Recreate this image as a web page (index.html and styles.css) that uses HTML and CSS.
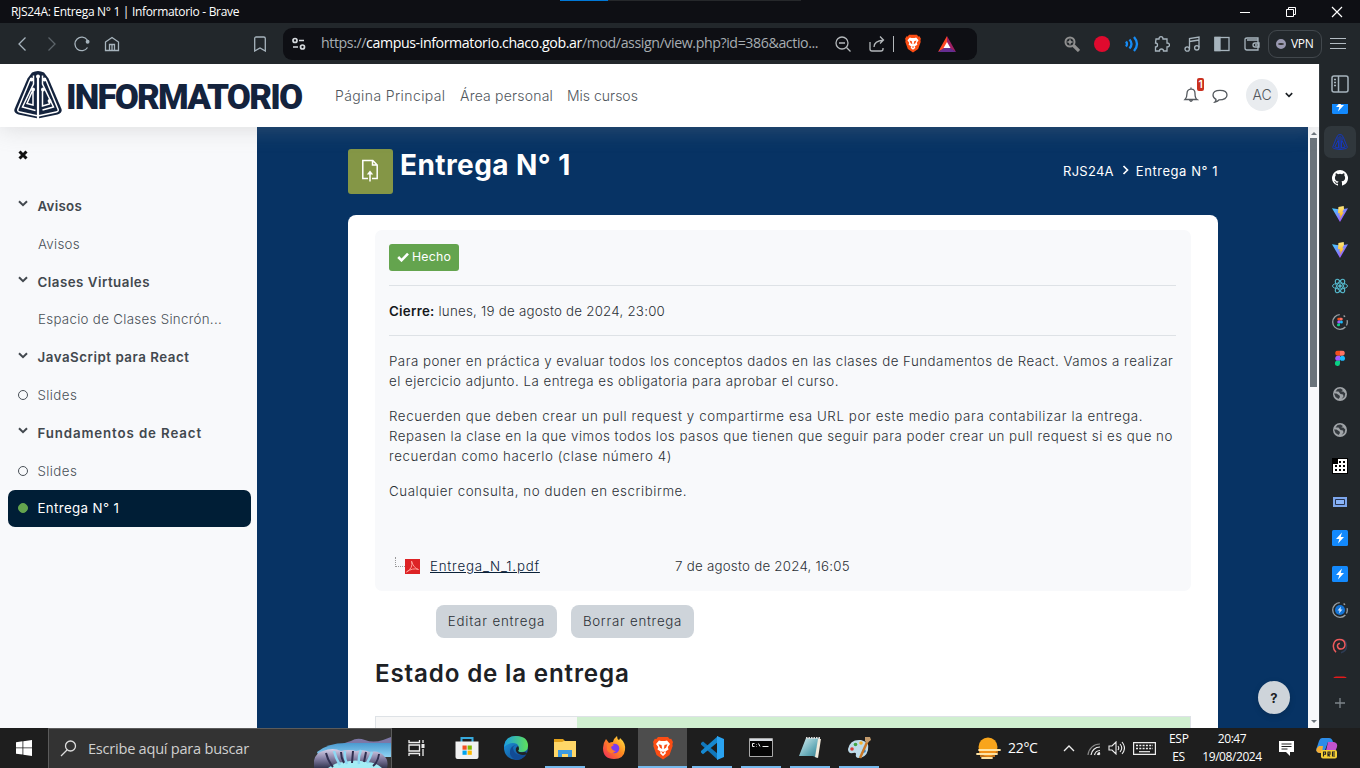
FILE: index.html
```html
<!DOCTYPE html>
<html lang="es">
<head>
<meta charset="utf-8">
<title>RJS24A: Entrega N° 1 | Informatorio</title>
<link rel="stylesheet" href="styles.css">
</head>
<body>
<svg class="defs" width="0" height="0" aria-hidden="true">
  <defs>
    <linearGradient id="vite" x1="0" y1="0" x2="1" y2="1"><stop offset="0" stop-color="#41d1ff"/><stop offset="1" stop-color="#bd34fe"/></linearGradient>
    <linearGradient id="spark" x1="0" y1="0" x2="0" y2="1"><stop offset="0" stop-color="#ffea83"/><stop offset="1" stop-color="#ffa800"/></linearGradient>
    <linearGradient id="edgeA" x1="0" y1="0" x2="1" y2="0"><stop offset="0" stop-color="#1b9de2"/><stop offset="1" stop-color="#5fe05a"/></linearGradient>
    <linearGradient id="edgeB" x1="0" y1="0" x2="1" y2="1"><stop offset="0" stop-color="#1b9de2"/><stop offset="1" stop-color="#123c84"/></linearGradient>
    <linearGradient id="fox" x1="1" y1="0" x2="0" y2="1"><stop offset="0" stop-color="#fff04a"/><stop offset=".45" stop-color="#ff8a1f"/><stop offset="1" stop-color="#f0245e"/></linearGradient>
    <linearGradient id="ice" x1="0" y1="0" x2="0" y2="1"><stop offset="0" stop-color="#d9d2ea"/><stop offset=".5" stop-color="#8580a5"/><stop offset="1" stop-color="#343650"/></linearGradient>
    <linearGradient id="sky" x1="0" y1="0" x2="0" y2="1"><stop offset="0" stop-color="#4a99cf"/><stop offset="1" stop-color="#8fd4f4"/></linearGradient>
    <linearGradient id="pad" x1="0" y1="0" x2="1" y2="1"><stop offset="0" stop-color="#d8f0f3"/><stop offset=".6" stop-color="#65aab7"/><stop offset="1" stop-color="#2f7686"/></linearGradient>
    <symbol id="bolt" viewBox="0 0 16 16"><rect width="16" height="16" rx="1.5" fill="#1389fd"/><path d="M10 2.500 4 9h3.300L6 13.500 12 7H8.700z" fill="#fff"/></symbol>
    <symbol id="viteicon" viewBox="0 0 16 16"><path d="M0 2.200 8 16 16 2.200 8.300 3.500z" fill="url(#vite)"/><path d="M11.700 0 6.400 1 6 7.300l1.800-.4-.6 2.500 1.400-.5-.8 4.200 4.100-7-1.800.3L12 3z" fill="url(#spark)"/></symbol>
    <symbol id="globe" viewBox="0 0 16 16"><circle cx="8" cy="8" r="7" fill="#a0a4a8"/><path d="M8.500 2.500 5.500 3 3.500 5.500h3L8.500 8l2.500.500.500 2-2 2.500 3-2 .800-3.500-2-2h-2L11 4zM2 7.500h2.500L7.500 9.500 8 11l-1.500 2-3-2z" fill="#353a3f"/></symbol>
    <symbol id="figma" viewBox="0 0 12 18"><path d="M3.500 0H6v6H3.500a3 3 0 0 1 0-6z" fill="#f24e1e"/><path d="M6 0h2.500a3 3 0 0 1 0 6H6z" fill="#ff7262"/><path d="M3.500 6H6v6H3.500a3 3 0 0 1 0-6z" fill="#a259ff"/><circle cx="8.800" cy="9" r="3" fill="#1abcfe"/><path d="M3.500 12H6v3a3 3 0 1 1-2.500-3z" fill="#0acf83"/></symbol>
    <symbol id="lion" viewBox="0 0 20 24"><path d="M5 1h10l1.700 2 1.500-.2L20 6l-.6 2 .3 2-3.200 9L10 23.500 3.500 19 .3 10l.3-2L0 6l1.800-3.200 1.500.2z" fill="#fb4d14"/><path d="M6 4.500l2 .6h4l2-.6 3 3.500-2.200 3 .7 2.600-3 2 .3 2L10 20l-2.800-2.400.3-2-3-2 .7-2.600L3 8z" fill="#fff"/><path d="M5.500 8.200l3 .8.700 4-2.200-1.200zm9 0-3 .8-.7 4 2.200-1.200zM8 15l2 1 2-1-2 3z" fill="#fb4d14"/></symbol>
    <symbol id="down" viewBox="0 0 10 7"><path d="m1 1.200 4 4 4-4" fill="none" stroke="currentColor" stroke-width="2"/></symbol>
  </defs>
</svg>

<div class="screen">
  <header class="titlebar">
    <span class="wintitle">RJS24A: Entrega N° 1 | Informatorio - Brave</span>
    <span class="loading"><i></i></span>
    <div class="winbtns">
      <svg width="12" height="12"><path d="M1 6.500h10" stroke="#fff"/></svg>
      <svg width="12" height="12" fill="none" stroke="#fff"><path d="M1.500 3.500h7v7h-7zM3.500 3.500v-2h7v7h-2"/></svg>
      <svg width="12" height="12"><path d="m1 1 10 10M11 1 1 11" stroke="#fff" stroke-width="1.200"/></svg>
    </div>
  </header>

  <nav class="toolbar">
    <div class="cells">
      <svg viewBox="0 0 16 16"><path d="M11.500 1.500 5 8l6.500 6.500"/></svg>
      <svg viewBox="0 0 16 16" class="dim"><path d="M4.500 1.500 11 8l-6.500 6.500"/></svg>
      <svg viewBox="0 0 16 16"><path d="M13.500 11.500A6.800 6.800 0 1 1 13.300 4"/><circle cx="13.600" cy="5.800" r="1.300" fill="#a7b4bd"/></svg>
      <svg viewBox="0 0 16 16"><path d="M1.500 6 8 1.500 14.500 6v8.500h-13zM5.500 14V8.500h5V14M8 9v5"/></svg>
    </div>
    <div class="cells mark"><svg viewBox="0 0 16 16"><path d="M2.700 2.500q0-1.500 1.500-1.500h7.600q1.500 0 1.500 1.500V15L8 12l-5.300 3z"/></svg></div>
    <div class="url">
      <svg class="site" width="16" height="16" viewBox="0 0 16 16" fill="none" stroke="#d6dade" stroke-width="1.700"><circle cx="4" cy="4.500" r="2"/><path d="M8 4.500h5M2 11h5" /><circle cx="11.500" cy="11" r="2"/></svg>
      <span class="address">https://<b>campus-informatorio.chaco.gob.ar</b>/mod/assign/view.php?id=386&amp;actio...</span>
      <svg class="zoomout" width="18" height="18" viewBox="0 0 18 18"><circle cx="8" cy="8" r="6"/><path d="m12.500 12.500 4 4M5 8h6"/></svg>
      <svg class="share" width="18" height="18" viewBox="0 0 18 18"><path d="M2 7v7q0 2 2 2h9q2 0 2-2v-1M6 12q0-6 9.500-7M12 1.500 15.500 5 12 8.500"/></svg>
      <i class="bar"></i>
      <svg class="lion" width="16" height="19"><use href="#lion"/></svg>
      <svg class="bat" width="18" height="16" viewBox="0 0 18 16"><path d="M9 0 0 16l9-5z" fill="#ff4724"/><path d="m9 0 9 16-9-5z" fill="#9e1f63"/><path d="M0 16 9 10l9 6z" fill="#662d91"/><path d="m9 6 3.500 6h-7z" fill="#fff"/></svg>
    </div>
    <div class="cells ext">
      <svg viewBox="0 0 16 16"><circle cx="6" cy="6" r="4.500" stroke="#8f8f8f" stroke-width="2"/><path d="m9.500 9.500 5.500 5.500" stroke="#8f8f8f" stroke-width="3.200"/><path d="M3.500 6h5M6 3.500v5" stroke="#999" stroke-width="1.500"/></svg>
      <svg viewBox="0 0 16 16"><circle cx="8" cy="8" r="8" fill="#df0a2e" stroke="none"/></svg>
      <svg viewBox="0 0 16 16"><g stroke="#178cf5" stroke-width="2.300"><path d="M2 5.500q2 2.500 0 5M5.500 3.500q4 4.500 0 9M10 1q6 7 0 14"/></g></svg>
      <svg viewBox="0 0 16 16"><path d="M2 3h3q0-2.300 2-2.300T9 3h4v4q2.500 0 2.500 2T13 11v4H9.500q0-2-2-2t-2 2H1.500v-4q2 0 2-2t-2-2z"/></svg>
      <svg viewBox="0 0 16 16"><path d="M5.500 13V2.500L15 1v10.500M5.500 5.500 15 4"/><circle cx="3.200" cy="13" r="2.200"/><circle cx="12.800" cy="11.800" r="2.200"/></svg>
      <svg viewBox="0 0 16 16"><rect x="1" y="1.500" width="14" height="13"/><path d="M1 1.500h5v13H1z" fill="#a7b4bd"/></svg>
      <svg viewBox="0 0 16 16"><path d="M14 4V2H3Q1 2 1 3.500V12q0 2 2 2h11V4H3M15 7h-4q-2 0-2 2t2 2h4zM11 9h2"/></svg>
    </div>
    <div class="vpn"><i></i>VPN</div>
    <svg class="burger" width="16" height="13"><path d="M0 1.500h16M0 6.500h16M0 11.500h16" stroke="#b3bcc3"/></svg>
  </nav>

  <div class="window">
    <div class="site-page">
      <header class="siteheader">
        <svg class="crest" width="48" height="48" viewBox="0 0 48 48">
          <path d="M18 1.500q6-3 12 0l4.500 6L47.500 38q1 4-4 5.500L24 47.500 4.500 43.500Q-.5 42 .5 38L13.500 7.500z" fill="#14233d"/>
          <g fill="none" stroke="#fff" stroke-width="1.500">
            <path d="M16 9 3.800 38.500q-.5 2 2 2.500L23 44.700M32 9l12.200 29.500q.5 2-2 2.500L25 44.700"/>
            <path d="M19.500 4.500V13L8.500 36l13 3.500M28.500 4.500V13L39.500 36l-11 3M19.500 18.500 17.500 22 13 32.500l6 1.500V18M28.500 18v17l7-2v-4"/>
          </g>
          <path d="M24 5v43" stroke="#fff" stroke-width="2.200"/>
          <g fill="#fff"><circle cx="24" cy="5.500" r="2"/><circle cx="17.500" cy="8.500" r="1.900"/><circle cx="30.500" cy="8.500" r="1.900"/><circle cx="19" cy="18.500" r="2"/><circle cx="29" cy="18.500" r="2"/><circle cx="35.500" cy="30" r="1.900"/></g>
        </svg>
        <span class="brand">INFORMATORIO</span>
        <a class="n1">Página Principal</a><a class="n2">Área personal</a><a class="n3">Mis cursos</a>
        <div class="user">
          <div class="bell"><svg width="16" height="16" viewBox="0 0 16 16" fill="none" stroke="#555a5f" stroke-width="1.300"><path d="M2 12.500q2-2 2-6T8 2.200t4 4.300 2 6zM6.500 13q1.500 2.500 3 0M8 .5v2"/></svg><b>1</b></div>
          <svg class="chat" width="16" height="14" viewBox="0 0 16 14" fill="none" stroke="#555a5f" stroke-width="1.300"><path d="M4 10.300Q1 8.800 1 6q0-4.700 7-4.700T15 6q0 4.800-8 4.800-1 1.500-4 2.200 1-1 1-2.700z"/></svg>
          <span class="avatar">AC</span>
          <svg class="caret" width="8" height="6"><use href="#down"/></svg>
        </div>
      </header>

      <div class="body">
        <aside class="drawer">
          <svg class="close" width="10" height="10"><path d="m1.500 1.500 7 7M8.500 1.500l-7 7" stroke="#111" stroke-width="3"/></svg>
          <ul>
            <li class="sec"><svg width="10" height="7"><use href="#down"/></svg><span class="s1">Avisos</span></li>
            <li><span class="s2">Avisos</span></li>
            <li class="sec"><svg width="10" height="7"><use href="#down"/></svg><span class="s3">Clases Virtuales</span></li>
            <li><span class="s4">Espacio de Clases Sincrón...</span></li>
            <li class="sec"><svg width="10" height="7"><use href="#down"/></svg><span class="s5">JavaScript para React</span></li>
            <li><i class="ring"></i><span class="s6">Slides</span></li>
            <li class="sec"><svg width="10" height="7"><use href="#down"/></svg><span class="s7">Fundamentos de React</span></li>
            <li><i class="ring"></i><span class="s6">Slides</span></li>
            <li class="active"><i class="ring"></i><span class="s8">Entrega N° 1</span></li>
          </ul>
        </aside>

        <main>
          <div class="heading">
            <div class="acticon"><svg width="18" height="24" viewBox="0 0 18 24" fill="none" stroke="#fff" stroke-width="1.500"><path d="M7 19.500H1.800v-18h10l4.400 4.500v13.500H11M11.500 1.500V6H16M9 22.500V14"/><path d="M9 11.500 5.800 15.500h6.400z" fill="#fff" stroke="none"/></svg></div>
            <h1>Entrega N° 1</h1>
            <div class="crumbs"><span class="c1">RJS24A</span><svg width="7" height="10"><path d="m1.500 1 4 4-4 4" fill="none" stroke="#fff" stroke-width="1.700"/></svg><span class="c2">Entrega N° 1</span></div>
          </div>
          <section class="card">
            <div class="panel">
              <div class="done"><svg width="12" height="10"><path d="m1.200 5 3.300 3.300L11 1.700" fill="none" stroke="#fff" stroke-width="2.600"/></svg>Hecho</div>
              <div class="due"><b>Cierre:</b> <span>lunes, 19 de agosto de 2024, 23:00</span></div>
              <p><span class="l1">Para poner en práctica y evaluar todos los conceptos dados en las clases de Fundamentos de React. Vamos a realizar</span><br><span class="l2">el ejercicio adjunto. La entrega es obligatoria para aprobar el curso.</span></p>
              <p><span class="l3">Recuerden que deben crear un pull request y compartirme esa URL por este medio para contabilizar la entrega.</span><br><span class="l4">Repasen la clase en la que vimos todos los pasos que tienen que seguir para poder crear un pull request si es que no</span><br><span class="l5">recuerdan como hacerlo (clase número 4)</span></p>
              <p><span class="l6">Cualquier consulta, no duden en escribirme.</span></p>
              <div class="file">
                <i class="branch"></i>
                <svg width="15" height="15" viewBox="0 0 15 15"><rect width="15" height="15" fill="#dd2325"/><path d="M6.500 2q2 7-5 11 6-4.500 12-2.500Q8.500 9 6.500 2z" fill="none" stroke="#ff9e96"/></svg>
                <span class="name"><a>Entrega_N_1.pdf</a></span><span class="date">7 de agosto de 2024, 16:05</span>
              </div>
            </div>
            <div class="actions"><button class="edit">Editar entrega</button><button class="del">Borrar entrega</button></div>
            <h2>Estado de la entrega</h2>
            <div class="table"><div></div><div class="ok"></div></div>
          </section>
          <button class="help">?</button>
        </main>
        <div class="scroll"><i class="up"></i><i class="thumb"></i><i class="dn"></i></div>
      </div>
    </div>

    <aside class="strip">
      <svg class="panelicon" width="18" height="18" fill="none" stroke="#a7b4bd" stroke-width="1.500"><rect x="1" y="1" width="16" height="16" rx="2"/><path d="M7.500 1v16"/><path d="M3 4.500h2M3 7.500h2M3 10.500h2"/></svg>
      <div class="tabs">
        <div><svg><use href="#bolt"/></svg></div>
        <div class="on"><span><svg viewBox="0 0 16 16" fill="none" stroke="#1238c9" stroke-width=".9"><path d="M6.500.7h3l1.800 2.500 4 10-1 1.300-6.300 1-6.300-1-1-1.300 4-10zM8 2v13M6 3v3.500L2.800 13l3.700 1V6.500M10 3v3.500l3.200 6.500-3.700 1V6.500"/></svg></span></div>
        <div><svg viewBox="0 0 16 16"><path fill="#fff" d="M8 0a8 8 0 0 0-2.530 15.590c.4.070.550-.170.550-.380v-1.490c-2.230.480-2.690-.940-2.690-.940-.360-.930-.890-1.170-.890-1.170-.730-.500.050-.490.050-.490.800.060 1.230.830 1.230.830.720 1.220 1.870.870 2.330.660.070-.520.280-.870.510-1.070-1.780-.200-3.640-.890-3.640-3.950 0-.870.310-1.590.820-2.150-.080-.200-.360-1.020.080-2.120 0 0 .670-.210 2.200.820a7.600 7.600 0 0 1 4 0c1.530-1.040 2.200-.820 2.200-.820.440 1.100.160 1.920.080 2.120.510.560.820 1.270.820 2.150 0 3.070-1.870 3.750-3.650 3.950.290.250.540.730.540 1.480v2.190c0 .210.150.460.550.380A8 8 0 0 0 8 0z"/></svg></div>
        <div><svg><use href="#viteicon"/></svg></div>
        <div><svg><use href="#viteicon"/></svg></div>
        <div><svg viewBox="0 0 16 16" fill="none" stroke="#55b8cc"><ellipse cx="8" cy="8" rx="7.500" ry="3"/><ellipse cx="8" cy="8" rx="7.500" ry="3" transform="rotate(60 8 8)"/><ellipse cx="8" cy="8" rx="7.500" ry="3" transform="rotate(120 8 8)"/><circle cx="8" cy="8" r="1.300" fill="#55b8cc"/></svg></div>
        <div><svg viewBox="0 0 16 16"><circle class="orbit" cx="8" cy="8" r="7.300"/><use href="#figma" x="5" y="3.500" width="6" height="9"/></svg></div>
        <div><svg viewBox="0 0 16 16"><use href="#figma" x="2.500" y="0.500" width="11" height="15.500"/></svg></div>
        <div><svg><use href="#globe"/></svg></div>
        <div><svg><use href="#globe"/></svg></div>
        <div><svg viewBox="0 0 16 16"><path d="M0 0h16v16H0z"/><path d="M6 1h9v14H1V6h5z" fill="#fff"/><path d="M7 3h2v2H7zm4 0h2v2h-2zM3 7h2v2H3zm4 0h2v2H7zm4 0h2v2h-2zM3 11h2v2H3zm4 0h2v2H7zm4 0h2v2h-2z"/></svg></div>
        <div><svg viewBox="0 0 16 16"><path d="M1 3h14v10H1z" fill="#7da6ec"/><path d="M3.500 5.500h9v5h-9z" fill="#8ab4f8" stroke="#26334f"/></svg></div>
        <div><svg><use href="#bolt"/></svg></div>
        <div><svg><use href="#bolt"/></svg></div>
        <div><svg viewBox="0 0 16 16"><circle class="orbit" cx="8" cy="8" r="7.300"/><circle cx="8" cy="8" r="5" fill="#1373d6"/><path d="M9 4.500 5.500 8.500h2L7 11.500l3.500-4h-2z" fill="#cfe4fb"/></svg></div>
        <div><svg viewBox="0 0 16 16" fill="none" stroke-width="1.500"><path d="M9 14.800Q14.500 13 14.500 8T11 2" stroke="#2d3c55"/><path d="M4 14.200C-.5 10 1 1.500 7.500 1.500c7 0 7 9.500 1.500 9.500-4.500 0-4.500-6-1-5.500" stroke="#ef5a5c"/></svg></div>
        <div><svg viewBox="0 0 16 16"><rect x="1" y="2.500" width="14" height="11" rx="3" fill="#e31b1b"/></svg></div>
      </div>
      <svg class="plus" width="12" height="12"><path d="M6 1v10M1 6h10" stroke="#7d858b" stroke-width="1.300"/></svg>
    </aside>
  </div>

  <footer class="taskbar">
    <div class="start"><svg width="16" height="16" viewBox="0 0 16 16" fill="#fff"><path d="M0 2.200 6.500 1.300v6.200H0zM7.300 1.200 16 0v7.500H7.300zM0 8.300h6.500v6.300L0 13.700zM7.300 8.300H16V16l-8.700-1.300z"/></svg></div>
    <div class="search">
      <svg width="17" height="17" fill="none" stroke="#ddd" stroke-width="1.300"><circle cx="10.500" cy="6" r="5"/><path d="M7 10 1 16"/></svg>
      <span>Escribe aquí para buscar</span>
      <svg class="art" width="77" height="31" viewBox="0 0 77 31"><path d="M25 9q7-4 12-5 6-4 14-1 8 3 18 0l8-3v11z" fill="#7d77a6"/><path d="M3 15Q14 6 32 6l45 0v14H5z" fill="url(#sky)"/><path d="M0 31q-2-14 9-17 10-4 18 0 8-2 15 0 8-2 14 1 9-2 14 4 5 4 3 12z" fill="url(#ice)"/><path d="M14 31q8-6 16-6 12-3 22 0 10 0 16 6z" fill="#a5edf5"/><path d="M20 14q2 8 6 14M31 14q-1 7 2 13M47 13q-3 7-2 14M58 15q-2 6-5 11" fill="none" stroke="#8ed8f3" stroke-width="2.500"/><path d="M12 16q2 8 7 14M27 15q0 6 3 11M39 14l-1 12M52 15l-2 10M65 17q-1 8-6 12" fill="none" stroke="#302f50" stroke-width="2"/></svg>
    </div>
    <div class="tview"><svg width="17" height="16" fill="none" stroke="#eee" stroke-width="1.300"><path d="M1 0v2.500h10.500V0M1 5h10.500v6H1zM1 16v-2.500h10.500V16M15 0v3M15 9v7"/><path d="M15 4v4" stroke-width="3"/></svg></div>
    <div class="apps">
      <div><svg viewBox="0 0 24 24"><path d="M6.500 8V2h11v6" fill="none" stroke="#37a9dc" stroke-width="2"/><path d="M.5 5.500h23V21q0 2-2 2h-19q-2 0-2-2z" fill="#f1f1f1"/><path d="M7.500 9.500h4.200v4.200H7.500z" fill="#f25022"/><path d="M12.600 9.500h4.200v4.200h-4.200z" fill="#7fba00"/><path d="M7.500 14.600h4.200v4.200H7.500z" fill="#00a4ef"/><path d="M12.600 14.600h4.200v4.200h-4.200z" fill="#ffb900"/></svg></div>
      <div><svg viewBox="0 0 24 24"><circle cx="12" cy="12" r="12" fill="url(#edgeB)"/><path d="M0 11Q1 0 12 0q12 0 12 10 0 6-7 6-4 0-3-2 2-3-1-6Q7 5 0 11z" fill="url(#edgeA)"/><path d="M9 12q1 6 6 7 4 1 7-1l-1 2q-4 4-9 4-7-3-6-9 .5-5 6-6-3 1-3 3z" fill="#124b95"/><path d="M14 10q2 3 0 5 2 2 6 1 3 0 3 2-4 2-8 0-4-2-3-6z" fill="#202326"/></svg></div>
      <div class="run"><svg viewBox="0 0 24 24"><path d="M1 3h9l2 2h11v4H1z" fill="#e3a21a"/><path d="M1 6h8l2-1h12v16H1z" fill="#ffd768"/><path d="M5 21v-7h14v7h-4v-3H9v3z" fill="#3d9ae0"/></svg></div>
      <div><svg viewBox="0 0 24 24"><path d="M4 3l3 4q2-1 4-1 1-4 4-6 0 3 2 4 1-1 1-2 6 5 5 12-1 9-11 9Q1 23 1 12q0-5 3-9z" fill="url(#fox)"/><circle cx="12.500" cy="12.500" r="4.800" fill="#7a3cf0"/><path d="M5 8q4-2 7 1l-3 2q1 4 5 4-6 5-9-1z" fill="#ff7a2b"/></svg></div>
      <div class="run cur"><svg viewBox="0 0 24 24"><use href="#lion" x="2" width="20" height="24"/></svg></div>
      <div class="run"><svg viewBox="0 0 24 24"><path d="m1 7 2-1.500L18 18v6L1 8.500z" fill="#1177bb"/><path d="m1 16.500 2 1.800L18 6V0L1 15z" fill="#1688d0"/><path d="m17 0 7 3v18l-7 3z" fill="#2aa3f1"/></svg></div>
      <div class="run"><svg viewBox="0 0 24 24"><path d="M.5 2.500h23v18H.5z" fill="#050505" stroke="#a9a9a9"/><path d="M1 3h22v2H1z" fill="#d8dce2"/><path d="M5.500 7.500H3.500v3h2M7.500 8v.5M7.500 10v.5M9.500 7.500l1.500 3M13.500 10.500h6" fill="none" stroke="#eee"/></svg></div>
      <div class="run"><svg viewBox="0 0 24 24"><path d="M8 2h14l-3 20-4-2L1 20z" fill="url(#pad)"/><path d="M20 3l3 0-3 19-3-1z" fill="#f1eadb"/><path d="M8 2h14" stroke="#d8d8d8" stroke-width="2" stroke-dasharray="1.500 1"/></svg></div>
      <div class="run"><svg viewBox="0 0 24 24"><path d="M1 13Q3 3 14 4q9 2 7 10-2 8-10 8-3-1-2-4 0-2-3-1-5 1-5-4z" fill="#bedbe9"/><circle cx="5" cy="13" r="1.800" fill="#da3b38"/><circle cx="8.500" cy="8.500" r="1.800" fill="#42a544"/><circle cx="14" cy="7" r="1.800" fill="#f5b02d"/><circle cx="17" cy="15" r="1.800" fill="#287fd1"/><path d="m22 2-9 20" stroke="#c87726" stroke-width="2.500"/><path d="M18 1l5 0 1 3-4 3-2-2z" fill="#c49b6c"/></svg></div>
    </div>
    <div class="tray">
      <svg class="sun" width="25" height="22" viewBox="0 0 25 22"><circle cx="12" cy="10" r="9.500" fill="#f9a51b"/><path d="M3 13h21M1 17h20M6 21h10" stroke="#ffe3a3" stroke-width="1.800" stroke-linecap="round"/><path d="M3 15h19M4 19h15" stroke="#f08b18" stroke-width="1.600"/></svg>
      <span class="temp">22°C</span>
      <svg class="t1" width="12" height="8" fill="none" stroke="#eee" stroke-width="1.300"><path d="m1 7 5-5 5 5"/></svg>
      <svg class="t2" width="15" height="15" fill="none" stroke="#eee" stroke-width="1.200"><path d="M2 14A12 12 0 0 1 14 3" stroke="#888"/><path d="M5 14a9 9 0 0 1 9-8M8.500 14A6 6 0 0 1 14 9.500" /><path d="M12 14a3 3 0 0 1 2-2" stroke-width="2.500"/></svg>
      <svg class="t3" width="17" height="14" fill="none" stroke="#eee" stroke-width="1.100"><path d="M1 5h3l4-4v12L4 9H1zM10 5q1.500 2 0 4M12 3q3.500 4 0 8M14 1q5 6 0 12"/></svg>
      <svg class="t4" width="23" height="13" fill="none" stroke="#eee" stroke-width="1.200"><path d="M.6.600h21.800v11.800H.6z"/><path d="M3 3.500h17M3 6.500h17" stroke-dasharray="2 1.300" stroke-width="1.500"/><path d="M6 9.700h11"/></svg>
      <span class="lang">ESP<br>ES</span>
      <span class="clock">20:47<br>19/08/2024</span>
      <svg class="t5" width="17" height="17"><path d="M1 1h15v11h-4v4l-4-4H1z" fill="#fff"/><path d="M3.500 4h10M3.500 6.500h10M3.500 9h6" stroke="#222"/></svg>
      <svg class="t6" width="22" height="21" viewBox="0 0 22 21"><path d="M6 0h7q3 0 4 4l-5 0-4 11H3q-4-1-2-6l2-6q1-3 3-3z" fill="#2d8ce8"/><path d="M12 4h6q4 1 3 5l-2 5q-1 3-5 3H9z" fill="#c254cf"/><path d="M3 8h4l-1 7H3q-4-1-2-5z" fill="#f3ad35"/><rect x="5" y="12" width="16" height="8.500" rx="2" fill="#f5cf35"/><path d="M7.500 18.500v-4.500h2v2.300h-2M12 18.500v-4.500h2v2.300h-2l2 2.200M19 14h-2.500v4H19M16.500 16H19" fill="none" stroke="#222" stroke-width="1.100"/></svg>
    </div>
  </footer>
</div>
</body>
</html>
```
FILE: styles.css
```css
* { box-sizing: border-box; }
body { margin: 0; background: #0e0f14; font-family: Inter, "Liberation Sans", sans-serif; white-space: nowrap; overflow: hidden; }
svg { display: block; flex: none; }
i { display: block; }
.defs { position: absolute; }
.screen { width: 1360px; height: 768px; display: flex; flex-direction: column; }

/* window title */
.titlebar { position: relative; height: 23px; display: flex; align-items: center; justify-content: space-between; padding: 0 17px 0 11px; background: #0e0f14; }
.wintitle { font: 12px/23px "Open Sans", sans-serif; letter-spacing: -.31px; color: #fff; }
.loading { position: absolute; left: 560px; top: 0; width: 241px; height: 1px; background: #26282b; }
.loading i { width: 48px; height: 1px; background: #0078d7; }
.winbtns { display: flex; gap: 34px; }

/* browser toolbar */
.toolbar { height: 41px; display: flex; align-items: center; padding-left: 7px; background: #22272b; }
.cells { display: flex; }
.cells svg { width: 16px; height: 16px; margin: 0 7px; fill: none; stroke: #a7b4bd; stroke-width: 1.3; }
.cells .dim { stroke: #5c646a; }
.mark { margin-left: 118px; }
.url { display: flex; align-items: center; width: 694px; height: 32px; margin-left: 8px; padding-left: 8px; border-radius: 9px; background: #0e0f14; }
.address { width: 498px; margin: -2px 0 0 14px; font: 14.2px/20px "Open Sans", sans-serif; letter-spacing: -.41px; color: #a7adb2; }
.address b { font-weight: 400; color: #fff; }
.zoomout, .share { fill: none; stroke: #b4b8bb; stroke-width: 1.3; }
.zoomout { margin-left: 15px; }
.share { margin-left: 16px; }
.bar { width: 1px; height: 16px; margin-left: 7px; background: #b4b8bb; }
.url .lion { margin-left: 11px; }
.bat { margin-left: 17px; }
.ext { margin-left: 80px; }
.vpn { display: flex; align-items: center; gap: 5px; width: 54px; height: 28px; margin-left: 1px; padding-left: 7px; border: 1px solid #42484d; border-radius: 9px; font: 12px "Open Sans", sans-serif; letter-spacing: -.3px; color: #fff; }
.vpn i { width: 10px; height: 10px; border-radius: 50%; border: 4px solid #9a99b1; border-width: 4px 2px; background: #333; }
.burger { margin-left: 8px; }

.window { height: 664px; display: flex; background: #22272b; }
.site-page { width: 1319px; height: 664px; background: #fff; }

/* site header */
.siteheader { position: relative; z-index: 2; display: flex; align-items: center; height: 63px; padding: 0 0 1px 14px; background: #fff; box-shadow: 0 0 24px rgba(150, 150, 150, .32); font-size: 14px; font-weight: 300; color: #50565c; clip-path: inset(0 0 -40px 0); }
.brand { width: 237px; margin: 5px 0 0 4px; font: 900 35px/40px Roboto, sans-serif; letter-spacing: -1.85px; color: #14233d; }
.n1 { margin-left: 32px; width: 125px; letter-spacing: .4px; }
.n2 { width: 107px; letter-spacing: .2px; }
.user { display: flex; align-items: center; margin-left: auto; margin-right: 26px; }
.bell { position: relative; }
.bell b { position: absolute; left: 14px; top: -9px; width: 7px; height: 13px; border-radius: 2px; background: #ca3120; color: #fff; font: 600 10px/13px Inter, sans-serif; text-align: center; }
.chat { margin-left: 13px; margin-top: 2px; }
.avatar { width: 32px; height: 32px; margin-left: 18px; border-radius: 50%; background: #e9ecef; font-size: 14px; line-height: 32px; text-align: center; }
.caret { margin-left: 7px; color: #1d2125; }

.body { display: flex; height: 601px; }

/* course index */
.drawer { width: 257px; padding: 23px 6px 0 8px; background: #f8f9fb; color: #495057; }
.close { margin-left: 10px; }
.drawer ul { margin: 27px 0 0; padding: 0; list-style: none; }
.drawer li { display: flex; align-items: center; height: 37.82px; padding-left: 10px; font-size: 13.3px; font-weight: 300; border-radius: 7px; }
.drawer li > span:only-child { margin-left: 20px; }
.drawer li svg { margin: -4px 9.5px 0 0; }
.drawer .sec { font-weight: 600; color: #42484e; }
.ring { width: 10px; height: 10px; margin-right: 9.5px; border: 1px solid #495057; border-radius: 50%; }
.drawer .active { background: #001e36; color: #fff; font-weight: 400; }
.active .ring { background: #64a44e; border-color: #64a44e; }
.s1, .s2 { letter-spacing: .3px; }
.s3 { letter-spacing: .5px; }
.s4 { letter-spacing: .31px; }
.s5 { letter-spacing: .53px; }
.s6 { letter-spacing: .42px; }
.s7 { letter-spacing: .88px; }
.s8 { letter-spacing: .37px; }

/* activity */
main { position: relative; width: 1051px; padding: 22px 90px 0 91px; background: #073364; }
.heading { display: flex; height: 66px; }
.acticon { width: 45px; height: 45px; padding: 10px 0 0 13px; border-radius: 3px; background: #849646; }
h1 { margin: -2px 0 0 7px; font-size: 28px; line-height: 36px; font-weight: 700; letter-spacing: .42px; color: #fff; }
.crumbs { display: flex; align-items: center; height: 44px; margin-left: auto; font-size: 13px; color: #fff; }
.crumbs svg { margin: -2px 7px 0 8px; }
.c1 { letter-spacing: .25px; }
.c2 { letter-spacing: .55px; }
.card { height: 513px; padding: 15px 27px 0; border-radius: 8px 8px 0 0; background: #fff; overflow: hidden; color: #2b3036; font-size: 13.3px; line-height: 20px; font-weight: 300; }
.panel { height: 361px; padding: 14px 15px 14px 14px; background: #f8f9fb; border-radius: 7px; }
.done { display: flex; align-items: center; gap: 3px; width: 70px; height: 27px; padding: 0 0 1px 8px; border-radius: 3px; background: #64a44e; color: #fff; font-size: 12.3px; font-weight: 400; letter-spacing: .2px; }
.due { height: 51px; margin: 14px 0 15px; padding: 15px 0; border: solid #dee2e6; border-width: 1px 0; letter-spacing: .24px; }
.due b { font-weight: 600; color: #15181b; letter-spacing: .27px; }
.panel p { margin: 0 0 15px; }
.l1, .l2 { letter-spacing: .491px; }
.l3 { letter-spacing: .61px; }
.l4 { letter-spacing: .5px; }
.l5 { letter-spacing: .59px; }
.l6 { letter-spacing: .56px; }
.file { display: flex; align-items: center; margin-top: 55px; padding-left: 6px; }
.branch { width: 10px; height: 10px; margin-top: -9px; border: dotted #999; border-width: 0 0 1px 1px; }
.file .name { width: 245px; margin-left: 10px; }
.file a { letter-spacing: .8px; text-decoration: underline; color: #0b2239; }
.date { letter-spacing: .25px; }
.actions { display: flex; gap: 14px; margin: 14px 0 0 61px; }
.actions button { height: 33px; padding: 0 0 1px; border: 0; border-radius: 8px; background: #ced4da; color: #2b3036; font: 300 13.3px Inter, sans-serif; }
.actions .edit { width: 121px; letter-spacing: .82px; }
.actions .del { width: 123px; letter-spacing: .72px; }
h2 { margin: 20px 0 0; font-size: 24.2px; line-height: 32px; font-weight: 600; letter-spacing: .82px; color: #1d2125; }
.table { display: flex; height: 20px; margin-top: 26px; border: 1px solid #dee2e6; background: #f7f7f7; }
.table div { width: 201px; }
.table .ok { flex: 1; background: #d0efd0; }
.help { position: absolute; left: 1001px; top: 554px; width: 32px; height: 33px; padding: 0; border: 0; border-radius: 50%; background: #ced4da; color: #1d2125; font: 700 13px Inter, sans-serif; box-shadow: 0 2px 6px rgba(0, 0, 0, .15); }
.scroll { display: flex; flex-direction: column; align-items: center; width: 11px; background: #f8f9fb; }
.up { margin-top: 5px; border: 3px solid transparent; border-top: 0; border-bottom-color: #6a737b; }
.thumb { width: 7px; height: 249px; margin-top: 3px; background: #6a737b; }
.dn { margin: auto 0 5px; border: 3px solid transparent; border-bottom: 0; border-top-color: #6a737b; }

/* vertical tab strip */
.strip { width: 41px; padding-top: 11px; display: flex; flex-direction: column; align-items: center; border-left: 1px solid #343a3f; }
.tabs { height: 574px; margin-top: 11px; overflow: hidden; }
.tabs div { width: 32px; height: 36px; display: grid; place-items: center; }
.tabs div:first-child { margin-top: -16px; }
.tabs svg { width: 16px; height: 16px; }
.orbit { fill: none; stroke: #9aa0a5; stroke-width: 1.3; stroke-dasharray: 4 1.8 4 1.8 4 1.8 28.5; stroke-dashoffset: 12; }
.on span { width: 32px; height: 32px; border-radius: 7px; background: #30373c; display: grid; place-items: center; }
.plus { margin-top: 19px; }

/* taskbar */
.taskbar { height: 40px; display: flex; background: #1e1e1e; font-family: "Open Sans", sans-serif; color: #fff; }
.start { width: 48px; display: grid; place-items: center; }
.search { width: 344px; display: flex; align-items: center; padding-left: 11px; background: #333; border: 1px solid #5b5b5b; border-bottom: 0; }
.search span { margin: -2px 0 0 11px; font-size: 14.6px; letter-spacing: -.25px; color: #cfcfcf; }
.art { margin: 8px 0 0 auto; }
.tview { width: 50px; padding-left: 16px; display: flex; align-items: center; }
.apps { display: flex; }
.apps div { width: 49px; display: grid; place-items: center; }
.apps svg { width: 24px; height: 24px; }
.apps .run { background: linear-gradient(#76b9ed, #76b9ed) center bottom / 40px 2px no-repeat; }
.apps .cur { background: linear-gradient(#76b9ed, #76b9ed) center bottom / 49px 2px no-repeat #4d4d4d; }
.tray { display: flex; align-items: center; margin-left: auto; padding-right: 22px; font-size: 12px; letter-spacing: -.3px; }
.temp { margin: -1px 0 0 7px; width: 55px; font-size: 14px; }
.t2 { margin-left: 11px; }
.t3 { margin-left: 7px; }
.t4 { margin-left: 8px; }
.lang, .clock { text-align: center; line-height: 18px; }
.lang { margin-left: 13px; width: 19px; }
.clock { margin-left: 14px; width: 60px; letter-spacing: -.42px; }
.t5 { margin-left: 16px; }
.t6 { margin-left: 21px; }
```
